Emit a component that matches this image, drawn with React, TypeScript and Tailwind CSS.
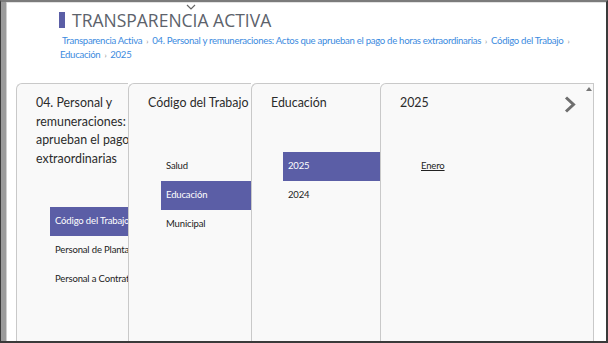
import React from "react";

const font = { fontFamily: 'Lato, "Noto Sans", sans-serif' };
const titleFont = { fontFamily: '"Open Sans", "Noto Sans", sans-serif' };

function Sep() {
  return <span className="mx-[4px] text-[#8a8a8a] text-[8px]">›</span>;
}

type Item = { label: string; active?: boolean; link?: boolean };

function Column({
  widthClass,
  header,
  items,
  listOffset,
  last,
}: {
  widthClass: string;
  header: string[];
  items: Item[];
  listOffset: string;
  last?: boolean;
}) {
  return (
    <div
      className={`${widthClass} ${last ? "flex-1 min-w-0 border-r" : "shrink-0"} relative overflow-hidden rounded-tl-[6px] border-l border-t border-[#c9c9c9] bg-[#f9f9f9] pt-[10px]`}
    >
      <div className="pl-[19px] text-[12.4px] leading-[18.5px] text-[#2b2b2b] whitespace-nowrap">
        {header.map((h) => (
          <div key={h}>{h}</div>
        ))}
      </div>
      <div className={`mt-[39px] ${listOffset} w-[300px]`}>
        {items.map((it) => (
          <div
            key={it.label}
            className={`h-[29px] flex items-center pl-[5px] text-[9.5px] tracking-[-0.15px] whitespace-nowrap ${
              it.active ? "bg-[#5b5ea6] text-white" : "text-[#222]"
            } ${it.link ? "underline" : ""}`}
          >
            {it.label}
          </div>
        ))}
      </div>
    </div>
  );
}

export default function App() {
  return (
    <div
      className="w-[608px] h-[343px] overflow-hidden flex border-t-2 border-t-[#7b7b7b] border-l border-l-[#3a3a3a] border-r-2 border-r-[#3a3a3a] border-b-2 border-b-[#3a3a3a] bg-white"
      style={font}
    >
      <div className="w-[6px] shrink-0 bg-[#9b9b9b] border-r border-r-[#cfcfcf]" />
      <div className="flex-1 min-w-0 flex flex-col relative border-t border-t-[#e2e2e2]">
        <svg
          className="absolute left-[179px] top-[1px]"
          width="10"
          height="6"
          viewBox="0 0 10 6"
        >
          <path d="M1 1 L5 5 L9 1" stroke="#666" strokeWidth="1.2" fill="none" />
        </svg>
        <div className="flex items-center pl-[52px] pt-[6px] h-[26px] mt-[1px]">
          <div className="w-[6px] h-[16px] bg-[#5b5ea6]" />
          <div
            className="ml-[7px] text-[17.5px] leading-[20px] text-[#5c626b]"
            style={titleFont}
          >
            TRANSPARENCIA ACTIVA
          </div>
        </div>
        <div className="pl-[53px] pr-[20px] mt-[4px] text-[9.6px] tracking-[-0.3px] leading-[13px] text-[#3c8be0]">
          <span className="pl-[2px]">Transparencia Activa</span>
          <Sep />
          <span>04. Personal y remuneraciones: Actos que aprueban el pago de horas extraordinarias</span>
          <Sep />
          <span>Código del Trabajo</span>
          <Sep />
          <br />
          <span>Educación</span>
          <Sep />
          <span>2025</span>
        </div>
        <div className="mt-[21px] ml-[9px] mr-[12px] flex-1 min-h-0 flex relative">
          <Column
            widthClass="w-[112px]"
            header={["04. Personal y", "remuneraciones: Actos que", "aprueban el pago de horas", "extraordinarias"]}
            items={[
              { label: "Código del Trabajo", active: true },
              { label: "Personal de Planta" },
              { label: "Personal a Contratación" },
            ]}
            listOffset="ml-[33px]"
          />
          <Column
            widthClass="w-[123px]"
            header={["Código del Trabajo"]}
            items={[{ label: "Salud" }, { label: "Educación", active: true }, { label: "Municipal" }]}
            listOffset="ml-[32px]"
          />
          <Column
            widthClass="w-[129px]"
            header={["Educación"]}
            items={[{ label: "2025", active: true }, { label: "2024" }]}
            listOffset="ml-[31px]"
          />
          <Column
            widthClass=""
            header={["2025"]}
            items={[{ label: "Enero", link: true }]}
            listOffset="ml-[35px]"
            last
          />
          <svg
            className="absolute right-[18px] top-[13px]"
            width="12"
            height="17"
            viewBox="0 0 12 17"
          >
            <path d="M2 1.5 L9.5 8.5 L2 15.5" stroke="#6e6e6e" strokeWidth="3" fill="none" />
          </svg>
          <svg className="absolute right-[2px] top-[4px]" width="6" height="4" viewBox="0 0 6 4">
            <path d="M0 4 L3 0 L6 4 Z" fill="#777" />
          </svg>
        </div>
      </div>
    </div>
  );
}
